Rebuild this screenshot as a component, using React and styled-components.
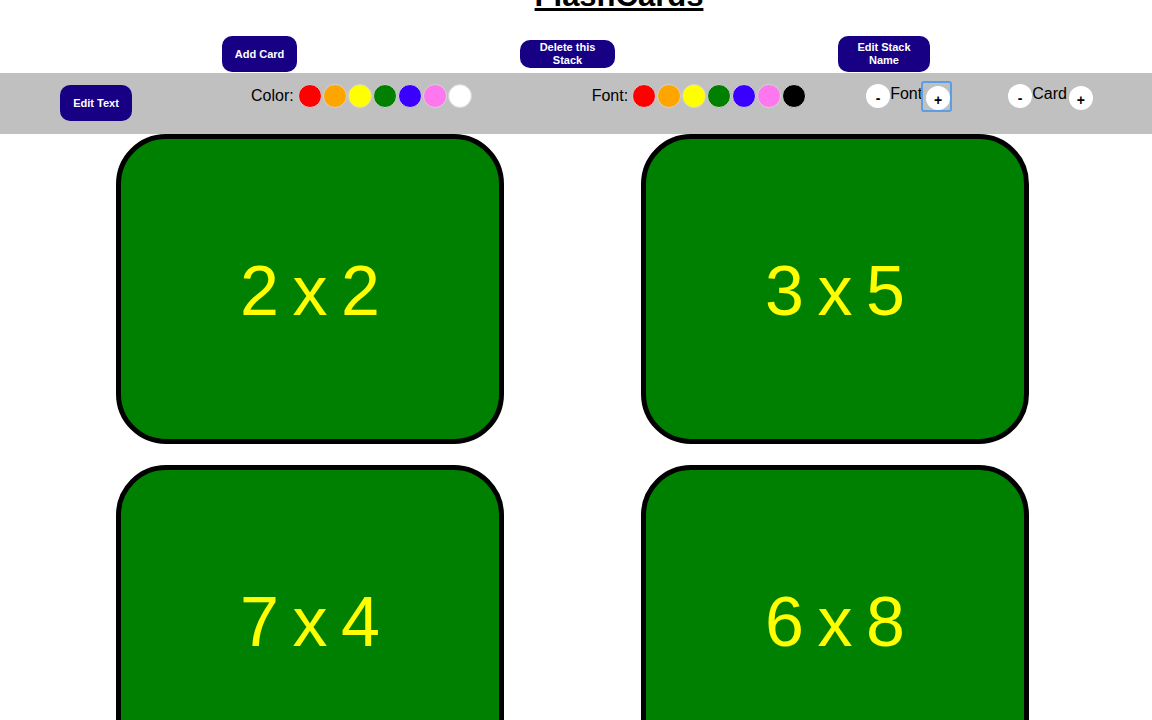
import React from 'react';
import styled, { createGlobalStyle } from 'styled-components';

const GlobalStyle = createGlobalStyle`
  body {
    margin: 0;
    background: #ffffff;
    font-family: "Liberation Sans", Arial, sans-serif;
    overflow: hidden;
  }
`;

const Page = styled.div`
  width: 1152px;
  height: 720px;
  overflow: hidden;
`;

const Title = styled.h1`
  margin: -20px 0 0;
  text-align: center;
  padding-left: 86px;
  font-size: 31px;
  line-height: 32px;
  font-weight: bold;
  text-decoration: underline;
  color: #000;
`;

const TopRow = styled.div`
  display: flex;
  justify-content: center;
  align-items: center;
  gap: 223px;
  height: 36px;
  margin: 24px 0 1px;
`;

const NavyButton = styled.button`
  width: ${(p) => p.$w}px;
  height: ${(p) => p.$h}px;
  padding: 0 4px;
  border: none;
  border-radius: 10px;
  background: #170084;
  color: #ffffff;
  font-family: "Liberation Sans", Arial, sans-serif;
  font-weight: bold;
  font-size: 11px;
  line-height: 13px;
  text-align: center;
  cursor: pointer;
`;

const Toolbar = styled.div`
  display: flex;
  align-items: flex-start;
  height: 61px;
  padding-left: 60px;
  background: #c0c0c0;
  box-sizing: border-box;
`;

const Group = styled.div`
  display: flex;
  align-items: center;
  margin-left: ${(p) => p.$left || 0}px;
  margin-top: ${(p) => p.$top || 0}px;
`;

const Label = styled.span`
  font-size: 16px;
  line-height: 18px;
  color: #000;
  margin-right: 4px;
`;

const Swatches = styled.div`
  display: flex;
  gap: 1px;
`;

const Swatch = styled.button`
  width: 24px;
  height: 24px;
  padding: 0;
  border-radius: 50%;
  border: 1px solid #d4d4d4;
  background: ${(p) => p.$color};
  box-sizing: border-box;
  cursor: pointer;
`;

const Stepper = styled.div`
  display: flex;
  align-items: flex-start;
  margin-left: ${(p) => p.$left}px;
  margin-top: 11px;
`;

const StepLabel = styled.span`
  font-size: 16px;
  line-height: 18px;
  margin-top: 1px;
  color: #000;
`;

const FocusRing = styled.span`
  display: flex;
  margin: -3px 0 0 -1px;
  padding: 3px 0 0 3px;
  width: 31px;
  height: 31px;
  box-sizing: border-box;
  border: 2px solid #5c9ee6;
  border-radius: 3px;
`;

const RoundButton = styled.button`
  width: 24px;
  height: 24px;
  padding: 3px 0 0;
  margin-top: ${(p) => (p.$low ? 2 : 0)}px;
  margin-left: ${(p) => p.$ml || 0}px;
  border: none;
  border-radius: 50%;
  background: #ffffff;
  color: #000;
  font-family: "Liberation Sans", Arial, sans-serif;
  font-weight: bold;
  font-size: 14px;
  line-height: 18px;
  box-sizing: border-box;
  outline: none;
  cursor: pointer;
`;

const CardGrid = styled.div`
  display: grid;
  grid-template-columns: 388px 388px;
  column-gap: 137px;
  row-gap: 21px;
  padding-left: 116px;
`;

const FlashCard = styled.div`
  height: 310px;
  box-sizing: border-box;
  border: 5px solid #000;
  border-radius: 50px;
  background: #008000;
  display: flex;
  align-items: center;
  justify-content: center;
  color: #ffff00;
  font-size: 70px;
  word-spacing: -6px;
  padding-top: 4px;
`;

const colors = ['#ff0000', '#ffa500', '#ffff00', '#008000', '#3a00ff', '#ff77ee', '#ffffff'];
const fontColors = ['#ff0000', '#ffa500', '#ffff00', '#008000', '#3a00ff', '#ff77ee', '#000000'];
const cards = ['2 x 2', '3 x 5', '7 x 4', '6 x 8'];

export default function App() {
  return (
    <Page>
      <GlobalStyle />
      <Title>FlashCards</Title>
      <TopRow>
        <NavyButton $w={75} $h={36}>Add Card</NavyButton>
        <NavyButton $w={95} $h={28}>Delete this Stack</NavyButton>
        <NavyButton $w={92} $h={36}>Edit Stack Name</NavyButton>
      </TopRow>
      <Toolbar>
        <Group $top={12}>
          <NavyButton $w={72} $h={36}>Edit Text</NavyButton>
        </Group>
        <Group $left={119} $top={11}>
          <Label>Color:</Label>
          <Swatches>
            {colors.map((c) => <Swatch key={c} $color={c} />)}
          </Swatches>
        </Group>
        <Group $left={120} $top={11}>
          <Label>Font:</Label>
          <Swatches>
            {fontColors.map((c) => <Swatch key={c} $color={c} />)}
          </Swatches>
        </Group>
        <Stepper $left={60}>
          <RoundButton>-</RoundButton>
          <StepLabel>Font</StepLabel>
          <FocusRing>
            <RoundButton>+</RoundButton>
          </FocusRing>
        </Stepper>
        <Stepper $left={56}>
          <RoundButton>-</RoundButton>
          <StepLabel>Card</StepLabel>
          <RoundButton $low $ml={2}>+</RoundButton>
        </Stepper>
      </Toolbar>
      <CardGrid>
        {cards.map((c) => <FlashCard key={c}>{c}</FlashCard>)}
      </CardGrid>
    </Page>
  );
}
